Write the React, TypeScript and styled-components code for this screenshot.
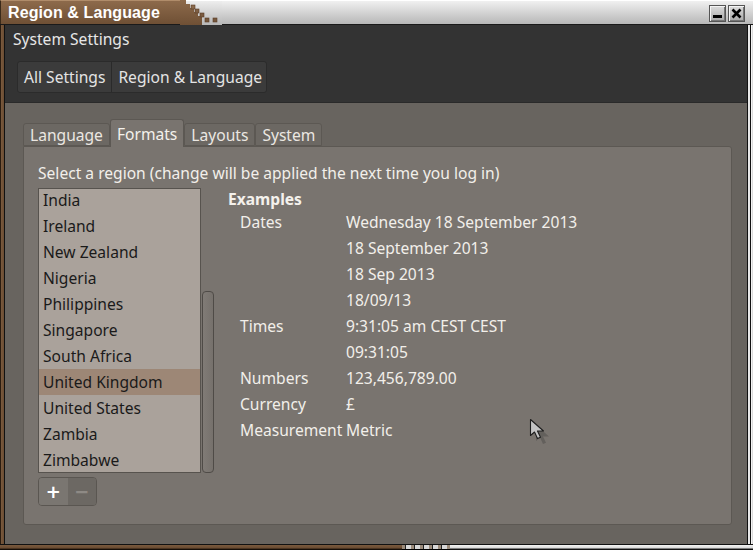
import React from "react";
import styled, { createGlobalStyle } from "styled-components";

const Global = createGlobalStyle`
  html, body { margin: 0; padding: 0; background: #000; }
  body { font-family: "Noto Sans", "DejaVu Sans", sans-serif; }
  * { box-sizing: border-box; }
`;

const UI = `"Noto Sans", "DejaVu Sans", sans-serif`;
const FS = "15.6px";

const Frame = styled.div`
  position: relative;
  width: 753px;
  height: 550px;
  display: flex;
  flex-direction: column;
  background: #000;
  overflow: hidden;
`;

const TitleBar = styled.div`
  height: 25px;
  display: flex;
  border-bottom: 1px solid #1a1a1a;
`;

const TitleBrown = styled.div`
  width: 180px;
  background: linear-gradient(#8d6a4b, #6f5035);
  border-top: 1px solid #b08c6a;
  border-left: 1px solid #3a2a1a;
  display: flex;
  align-items: center;
  padding-left: 7px;
  color: #fff;
  font-family: "Liberation Sans", Arial, sans-serif;
  font-weight: bold;
  font-size: 16px;
  letter-spacing: 0.1px;
`;

const TitleLight = styled.div`
  flex: 1;
  background: linear-gradient(#f0f0f0, #c8c8c8 70%, #b8b8b8);
  border-top: 1px solid #fff;
  display: flex;
  justify-content: flex-end;
  align-items: flex-start;
  padding: 4px 8px 0 0;
  gap: 2px;
`;

const WinButton = styled.div`
  width: 17px;
  height: 17px;
  background: linear-gradient(#dcdcdc, #a8a8a8);
  border: 1px solid #555;
  box-shadow: inset 1px 1px 0 #f4f4f4, inset -1px -1px 0 #777;
  display: flex;
  align-items: center;
  justify-content: center;
`;

const Middle = styled.div`
  flex: 1;
  display: flex;
  min-height: 0;
`;

const LeftBorder = styled.div`
  width: 5px;
  background: linear-gradient(90deg, #2a1c10 0, #2a1c10 1px, #7a5a3e 1px, #6a4c32 4px, #111 4px);
`;

const RightBorder = styled.div`
  width: 6px;
  background: linear-gradient(90deg, #111 0, #111 1px, #e8e8e8 1px, #e8e8e8 3px, #111 3px, #111 4px, #fff 4px, #d0d0d0 6px);
`;

const BottomBorder = styled.div`
  height: 6px;
  display: flex;
  border-top: 1px solid #111;
`;

const BottomBrown = styled.div`
  width: 402px;
  background: linear-gradient(#7a5a3e, #6a4c32 3px, #2a1c10 4px, #000 5px);
`;

const BottomPixels = styled.div`
  width: 48px;
  background:
    linear-gradient(transparent 4px, #000 4px),
    repeating-linear-gradient(90deg, #9a8a7a 0, #9a8a7a 3px, #222 3px, #222 4px, #d8d8d8 4px, #d8d8d8 9px);
`;

const BottomLight = styled.div`
  flex: 1;
  background: linear-gradient(#f4f4f4, #d8d8d8 3px, #222 4px, #000 5px);
`;

const Content = styled.div`
  flex: 1;
  display: flex;
  flex-direction: column;
  min-width: 0;
`;

const Header = styled.div`
  height: 78px;
  background: #333333;
  border-bottom: 1px solid #2a2a2a;
  padding: 4px 0 0 8px;
  display: flex;
  flex-direction: column;
`;

const HeaderTitle = styled.div`
  color: #e6e6e6;
  font-family: ${UI};
  font-size: ${FS};
  line-height: 20px;
  height: 20px;
`;

const Crumbs = styled.div`
  margin-top: 12px;
  margin-left: 4px;
  align-self: flex-start;
  display: flex;
  height: 32px;
  background: #3b3b3b;
  border: 1px solid #2b2b2b;
  border-radius: 3px;
`;

const Crumb = styled.div<{ $last?: boolean }>`
  display: flex;
  align-items: center;
  padding: 0 ${(p) => (p.$last ? "4px" : "6px")} 0 6px;
  color: #e4e4e4;
  font-family: ${UI};
  font-size: ${FS};
  border-right: ${(p) => (p.$last ? "none" : "1px solid #2a2a2a")};
`;

const Main = styled.div`
  flex: 1;
  background: #68645f;
  padding: 16px 15px 19px 18px;
  display: flex;
  flex-direction: column;
`;

const Tabs = styled.div`
  display: flex;
  align-items: flex-end;
  height: 27px;
  position: relative;
  z-index: 1;
`;

const Tab = styled.div<{ $active?: boolean }>`
  height: ${(p) => (p.$active ? "28px" : "23px")};
  margin-bottom: ${(p) => (p.$active ? "-1px" : "0")};
  padding: 0 6px;
  display: flex;
  align-items: center;
  background: ${(p) => (p.$active ? "#79746f" : "#6c6863")};
  border: 1px solid #5c5853;
  border-bottom: ${(p) => (p.$active ? "none" : "1px solid #5c5853")};
  border-radius: 3px 3px 0 0;
  color: ${(p) => (p.$active ? "#f4f1ec" : "#ebe7e2")};
  font-family: ${UI};
  font-size: ${FS};
  padding-top: ${(p) => (p.$active ? "0" : "1px")};
`;

const Panel = styled.div`
  flex: 1;
  background: #79746f;
  border: 1px solid #5c5853;
  border-radius: 0 3px 3px 3px;
  padding: 16px 14px 0 14px;
  display: flex;
  flex-direction: column;
`;

const Hint = styled.div`
  color: #f2efea;
  font-family: ${UI};
  font-size: ${FS};
  line-height: 20px;
`;

const Columns = styled.div`
  display: flex;
  margin-top: 5px;
`;

const LeftCol = styled.div`
  display: flex;
  flex-direction: column;
`;

const ListRow = styled.div`
  display: flex;
  gap: 1px;
`;

const List = styled.div`
  width: 163px;
  height: 285px;
  background: #aaa29b;
  border: 1px solid #57534e;
  overflow: hidden;
`;

const ListInner = styled.div`
  margin-top: -2px;
`;

const Item = styled.div<{ $selected?: boolean }>`
  height: 26px;
  padding-left: 4px;
  display: flex;
  align-items: center;
  color: #1a1a1a;
  font-family: ${UI};
  font-size: ${FS};
  background: ${(p) => (p.$selected ? "#9d8776" : "transparent")};
`;

const ScrollTrack = styled.div`
  width: 12px;
  height: 285px;
  display: flex;
  flex-direction: column;
  justify-content: flex-end;
`;

const Thumb = styled.div`
  height: 182px;
  background: linear-gradient(90deg, #807b76, #76716c);
  border: 1px solid #4f4b47;
  border-radius: 4px;
`;

const BtnGroup = styled.div`
  margin-top: 4px;
  display: flex;
  width: 59px;
  height: 29px;
  border: 1px solid #5a5651;
  border-radius: 4px;
  overflow: hidden;
`;

const SmallBtn = styled.div<{ $on?: boolean }>`
  flex: 1;
  background: ${(p) => (p.$on ? "#7a7671" : "#6c6863")};
  color: ${(p) => (p.$on ? "#ffffff" : "#8e8a85")};
  display: flex;
  align-items: center;
  justify-content: center;
  font-family: "DejaVu Sans", sans-serif;
  font-size: 18px;
  font-weight: bold;
`;

const Examples = styled.div`
  margin-left: 14px;
  display: flex;
  flex-direction: column;
`;

const ExHead = styled.div`
  color: #f4f1ec;
  font-family: ${UI};
  font-weight: bold;
  font-size: ${FS};
  line-height: 20px;
  margin-top: 1px;
`;

const ExGrid = styled.div`
  margin-top: 0px;
  margin-left: 12px;
  display: grid;
  grid-template-columns: 106px auto;
  grid-auto-rows: 26px;
  color: #f2efea;
  font-family: ${UI};
  font-size: ${FS};
  align-items: center;
`;

const Cursor = styled.svg`
  position: absolute;
  left: 529px;
  top: 418px;
`;

const rows = [
  "India",
  "Ireland",
  "New Zealand",
  "Nigeria",
  "Philippines",
  "Singapore",
  "South Africa",
  "United Kingdom",
  "United States",
  "Zambia",
  "Zimbabwe",
];

const examples: [string, string][] = [
  ["Dates", "Wednesday 18 September 2013"],
  ["", "18 September 2013"],
  ["", "18 Sep 2013"],
  ["", "18/09/13"],
  ["Times", "9:31:05 am CEST CEST"],
  ["", "09:31:05"],
  ["Numbers", "123,456,789.00"],
  ["Currency", "£"],
  ["Measurement", "Metric"],
];

const Staircase = () => (
  <svg width="42" height="25" viewBox="0 0 42 25" style={{ display: "block", flex: "none" }}>
    <defs>
      <linearGradient id="lg" x1="0" y1="0" x2="0" y2="1">
        <stop offset="0" stopColor="#f0f0f0" />
        <stop offset="0.7" stopColor="#c8c8c8" />
        <stop offset="1" stopColor="#b8b8b8" />
      </linearGradient>
      <linearGradient id="bg" x1="0" y1="0" x2="0" y2="1">
        <stop offset="0" stopColor="#8d6a4b" />
        <stop offset="1" stopColor="#6f5035" />
      </linearGradient>
    </defs>
    <rect width="42" height="25" fill="url(#lg)" />
    <rect x="0" y="0" width="42" height="1" fill="#fff" />
    <polygon points="0,0 6,0 6,4 10,4 10,8 14,8 14,12 18,12 18,16 22,16 22,25 0,25" fill="url(#bg)" />
    <rect x="11" y="5" width="4" height="4" fill="#8a6a4c" stroke="#5a3e28" strokeWidth="0.6" />
    <rect x="15" y="9" width="4" height="4" fill="#7e5f44" stroke="#5a3e28" strokeWidth="0.6" />
    <rect x="20" y="13" width="4" height="4" fill="#7a5b40" stroke="#5a3e28" strokeWidth="0.6" />
    <rect x="25" y="18" width="4" height="4" fill="#76573c" stroke="#5a3e28" strokeWidth="0.6" />
    <rect x="33" y="18" width="4" height="4" fill="#76573c" stroke="#5a3e28" strokeWidth="0.6" />
  </svg>
);

export default function App() {
  return (
    <>
      <Global />
      <Frame>
        <TitleBar>
          <TitleBrown>Region &amp; Language</TitleBrown>
          <Staircase />
          <TitleLight>
            <WinButton>
              <svg width="11" height="11" viewBox="0 0 11 11">
                <rect x="1" y="7" width="9" height="3" fill="#000" />
              </svg>
            </WinButton>
            <WinButton>
              <svg width="11" height="11" viewBox="0 0 11 11">
                <path d="M1.5 1.5 L9.5 9.5 M9.5 1.5 L1.5 9.5" stroke="#000" strokeWidth="2.6" />
              </svg>
            </WinButton>
          </TitleLight>
        </TitleBar>
        <Middle>
          <LeftBorder />
          <Content>
            <Header>
              <HeaderTitle>System Settings</HeaderTitle>
              <Crumbs>
                <Crumb>All Settings</Crumb>
                <Crumb $last>Region &amp; Language</Crumb>
              </Crumbs>
            </Header>
            <Main>
              <Tabs>
                <Tab>Language</Tab>
                <Tab $active>Formats</Tab>
                <Tab>Layouts</Tab>
                <Tab>System</Tab>
              </Tabs>
              <Panel>
                <Hint>Select a region (change will be applied the next time you log in)</Hint>
                <Columns>
                  <LeftCol>
                    <ListRow>
                      <List>
                        <ListInner>
                          {rows.map((r) => (
                            <Item key={r} $selected={r === "United Kingdom"}>
                              {r}
                            </Item>
                          ))}
                        </ListInner>
                      </List>
                      <ScrollTrack>
                        <Thumb />
                      </ScrollTrack>
                    </ListRow>
                    <BtnGroup>
                      <SmallBtn $on>+</SmallBtn>
                      <SmallBtn>−</SmallBtn>
                    </BtnGroup>
                  </LeftCol>
                  <Examples>
                    <ExHead>Examples</ExHead>
                    <ExGrid>
                      {examples.map(([k, v], i) => (
                        <React.Fragment key={i}>
                          <span>{k}</span>
                          <span>{v}</span>
                        </React.Fragment>
                      ))}
                    </ExGrid>
                  </Examples>
                </Columns>
              </Panel>
            </Main>
          </Content>
          <RightBorder />
        </Middle>
        <BottomBorder>
          <BottomBrown />
          <BottomPixels />
          <BottomLight />
        </BottomBorder>
        <Cursor width="24" height="28" viewBox="0 0 24 28">
          <path d="M5 5 L5 21 L9 17.5 L12 24 L15 22.8 L12 16.5 L18 16.5 Z" fill="#333" opacity="0.3" transform="translate(2,2)" />
          <path d="M1.5 1.5 L1.5 17.5 L5.5 14 L8.5 20.5 L11.5 19.3 L8.5 13 L14.5 13 Z" fill="#c4c4c4" stroke="#1e1e1e" strokeWidth="1.1" strokeLinejoin="round" />
        </Cursor>
      </Frame>
    </>
  );
}
